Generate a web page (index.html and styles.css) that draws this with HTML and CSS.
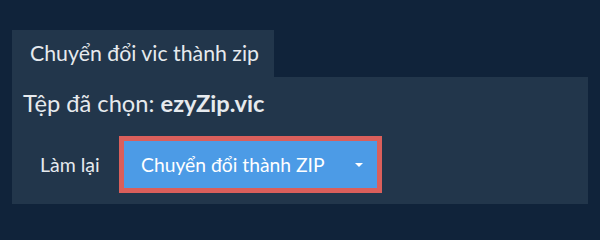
FILE: index.html
```html
<!DOCTYPE html>
<html lang="vi">
<head>
<meta charset="utf-8">
<link rel="stylesheet" href="styles.css">
</head>
<body>
<div class="wrap">
  <div class="tab">Chuyển đổi vic thành zip</div>
  <div class="panel">
    <div class="file">Tệp đã chọn: <b>ezyZip.vic</b></div>
    <div class="actions">
      <span class="reset">Làm lại</span>
      <div class="convert">
        <span class="label">Chuyển đổi thành ZIP</span>
        <span class="caret"></span>
      </div>
    </div>
  </div>
</div>
</body>
</html>
```
FILE: styles.css
```css
html, body {
  margin: 0;
  padding: 0;
  background: #10233a;
  font-family: Lato, "Noto Sans", sans-serif;
  color: #e6eaee;
}
.wrap {
  padding: 30px 12px 0 12px;
}
.tab {
  display: inline-block;
  box-sizing: border-box;
  width: 262px;
  height: 47px;
  line-height: 47px;
  padding: 0 0 0 18px;
  background: #22364b;
  font-size: 21.3px;
  white-space: nowrap;
}
.panel {
  background: #22364b;
  height: 127px;
  box-sizing: border-box;
  padding: 0 10px;
}
.file {
  font-size: 23.7px;
  height: 52px;
  line-height: 52px;
  padding-left: 1px;
  white-space: nowrap;
}
.file b {
  font-weight: 700;
}
.actions {
  display: flex;
  align-items: center;
  margin-top: 7px;
}
.reset {
  box-sizing: border-box;
  width: 97px;
  font-size: 19.5px;
  padding-left: 18px;
  white-space: nowrap;
}
.convert {
  display: flex;
  align-items: center;
  box-sizing: border-box;
  width: 263px;
  height: 57px;
  border: 5px solid #da5f5b;
  background: #4c9be6;
  padding: 0 14px 0 17px;
  font-size: 19.3px;
  color: #fff;
}
.label {
  flex: 1;
  white-space: nowrap;
}
.caret {
  width: 0;
  height: 0;
  border-left: 4px solid transparent;
  border-right: 4px solid transparent;
  border-top: 4px solid #fff;
}
```
